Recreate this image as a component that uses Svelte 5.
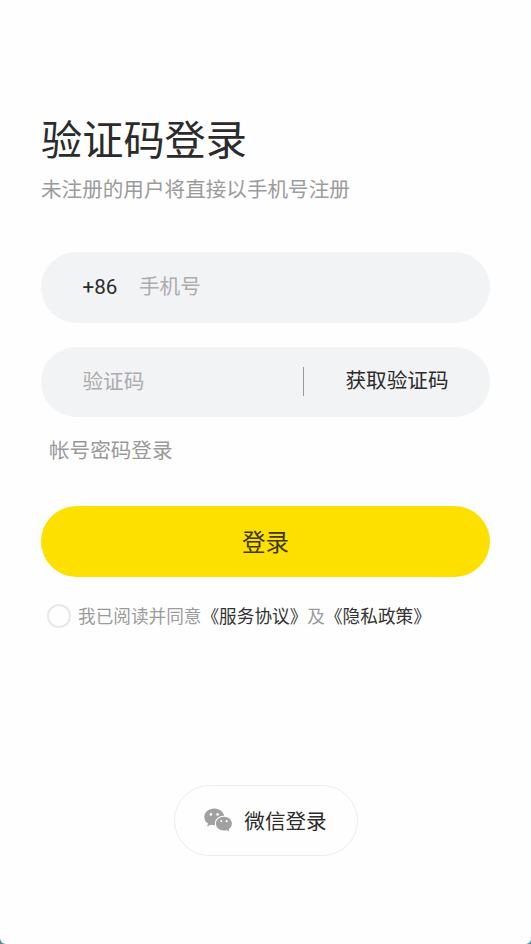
<script lang="ts">
	let phone = '';
	let code = '';
	let agreed = false;
</script>

<div class="backdrop">
	<main>
		<h1>验证码登录</h1>
		<p class="hint">未注册的用户将直接以手机号注册</p>

		<div class="field">
			<span class="prefix">+86</span>
			<input type="tel" placeholder="手机号" bind:value={phone} />
		</div>

		<div class="field">
			<input type="text" placeholder="验证码" bind:value={code} />
			<button class="get-code">获取验证码</button>
		</div>

		<button class="switch">帐号密码登录</button>
		<button class="login">登录</button>

		<label class="agreement">
			<input type="checkbox" bind:checked={agreed} />
			<span>我已阅读并同意<b>《服务协议》</b>及<b>《隐私政策》</b></span>
		</label>

		<button class="wechat">
			<svg viewBox="0 0 28 24" width="28" height="24">
				<path
					fill="#a0a0a0"
					d="M10.3 0.6C4.7 0.6 0.3 4.3 0.3 9c0 2.7 1.4 5 3.7 6.5L3.1 18.5l3.5-1.8c1.2.3 2.4.5 3.7.5h.7c-1-5.2 3.1-9.6 9.2-9.4C19.2 3.5 15.2.6 10.3.6Z"
				/>
				<path
					fill="#a0a0a0"
					d="M20 8.7c-4.6 0-8.1 3.1-8.1 6.9s3.5 7 8.1 7c1 0 1.9-.2 2.8-.4l2.6 1.4-.7-2.3c2-1.3 3.2-3.3 3.2-5.7 0-3.8-3.4-6.9-7.9-6.9Z"
				/>
				<g fill="#fff">
					<circle cx="6.9" cy="6.4" r="1.3" />
					<circle cx="13.6" cy="6.4" r="1.3" />
					<circle cx="17.3" cy="13.2" r="1.1" />
					<circle cx="22.7" cy="13.2" r="1.1" />
				</g>
			</svg>
			微信登录
		</button>
	</main>
</div>

<style>
	:global(body) {
		font-family: Roboto, 'Noto Sans CJK SC', sans-serif;
		color: #2b2b2b;
	}
	.backdrop {
		background: #4d8e99;
	}
	main {
		box-sizing: border-box;
		height: 944px;
		padding: 111px 41px 0;
		display: flex;
		flex-direction: column;
		background: #fefefe;
		border-radius: 0 0 5px 6px;
	}
	h1 {
		margin: 0;
		font-size: 41.2px;
		font-weight: 400;
		line-height: 60px;
	}
	.hint {
		margin: 4px 0 47px;
		font-size: 20.6px;
		line-height: 30px;
		color: #9b9b9b;
	}
	button {
		padding: 0;
		border: none;
		background: none;
		font: inherit;
		color: inherit;
		cursor: pointer;
	}
	.field {
		box-sizing: border-box;
		height: 70.5px;
		margin-bottom: 24px;
		padding: 0 41.5px;
		display: flex;
		align-items: center;
		flex-shrink: 0;
		border-radius: 36px;
		background: #f2f3f5;
		font-size: 20.6px;
	}
	.prefix {
		width: 56.5px;
	}
	.field input {
		flex: 1;
		min-width: 0;
		padding: 0;
		border: none;
		outline: none;
		background: none;
		font: inherit;
		color: inherit;
	}
	.field input::placeholder {
		color: #acacac;
		opacity: 1;
	}
	.get-code {
		height: 29px;
		padding-left: 41.5px;
		border-left: 1px solid #999;
		line-height: 29px;
	}
	.switch {
		align-self: flex-start;
		margin: -5px 0 40px 8px;
		font-size: 20.6px;
		line-height: 30px;
		color: #999;
	}
	.login {
		height: 70.5px;
		flex-shrink: 0;
		border-radius: 36px;
		background: #fee000;
		font-size: 23.5px;
		color: #3c3508;
	}
	.agreement {
		margin: 25px 0 0 6px;
		height: 28px;
		display: flex;
		align-items: center;
		gap: 7px;
		font-size: 17.65px;
		color: #9b9b9b;
		white-space: nowrap;
	}
	.agreement input {
		appearance: none;
		box-sizing: border-box;
		width: 24px;
		height: 24px;
		margin: 0;
		border: 2px solid #e8e8e8;
		border-radius: 50%;
	}
	.agreement input:checked {
		background: #fee000;
	}
	.agreement b {
		font-weight: 400;
		color: #333;
	}
	.wechat {
		align-self: center;
		width: 184px;
		height: 71px;
		margin-top: 155px;
		display: flex;
		align-items: center;
		justify-content: center;
		gap: 12px;
		border: 1.5px solid #ececec;
		border-radius: 36px;
		font-size: 20.6px;
	}
</style>
